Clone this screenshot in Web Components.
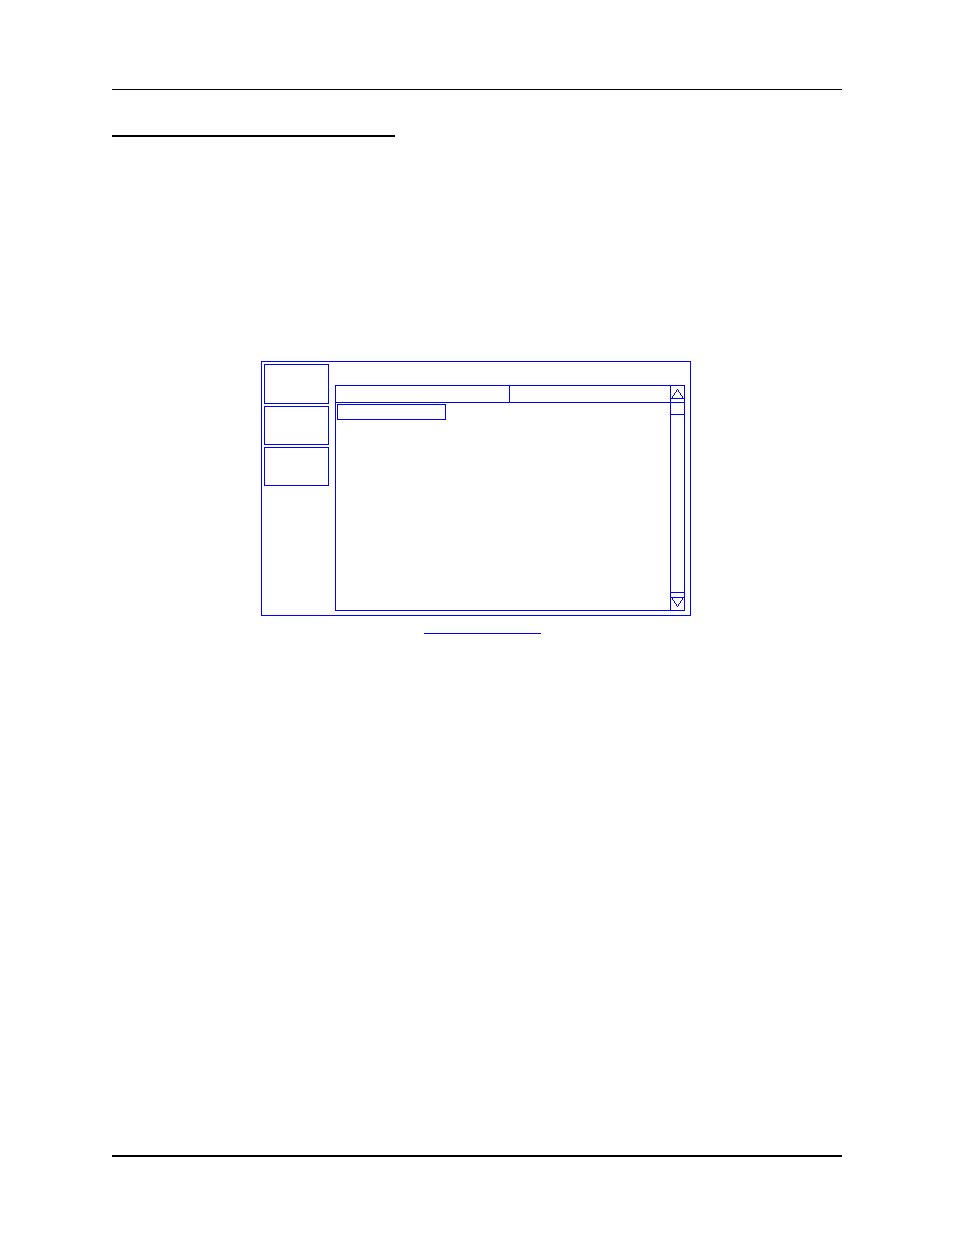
<!DOCTYPE html>
<html lang="en">
<head>
<meta charset="utf-8">
<meta name="viewport" content="width=device-width, initial-scale=1">
<title>Screen layout</title>
<style>
  body {
    margin: 0;
    background: #fff;
    color: #000;
    font-family: "Liberation Sans", sans-serif;
    --line: #00f;
  }
</style>
</head>
<body>
<manual-page>
  <screen-frame>
    <soft-key slot="keys" class="tall"></soft-key>
    <soft-key slot="keys"></soft-key>
    <soft-key slot="keys"></soft-key>
    <list-panel></list-panel>
  </screen-frame>
</manual-page>

<script>
(function () {
  "use strict";

  function define(name, html) {
    const template = document.createElement("template");
    template.innerHTML = html;

    customElements.define(name, class extends HTMLElement {
      constructor() {
        super();
        this.attachShadow({ mode: "open" });
        this.shadowRoot.appendChild(template.content.cloneNode(true));
      }
    });
  }

  // Page with its header rule, title rule and footer rule
  define("manual-page", `
  <style>
    :host {
      display: flex;
      flex-direction: column;
      box-sizing: border-box;
      min-height: 100vh;
      padding: 89px 112px 78px;
    }
    header { border-top: 1px solid; }
    .title {
      width: 283px;
      margin-top: 45px;
      border-top: 2px solid;
    }
    main { flex: 1; padding: 224px 0 48px 149px; }
    footer { border-top: 2px solid; }
  </style>
  <header></header>
  <div class="title"></div>
  <main><slot></slot></main>
  <footer></footer>
`);

  define("screen-frame", `
  <style>
    :host { display: block; max-width: 430px; }
    figure { margin: 0; }
    .screen {
      display: flex;
      gap: 6px;
      padding: 2px;
      border: 1px solid var(--line);
    }
    nav {
      display: flex;
      flex-direction: column;
      flex: none;
      gap: 2px;
      width: 65px;
    }
    .content {
      flex: 1;
      min-width: 0;
      padding: 21px 3px 2px 0;
    }
    figcaption {
      width: 117px;
      margin: 17px 0 0 163px;
      border-top: 1px solid var(--line);
    }
  </style>
  <figure>
    <div class="screen">
      <nav><slot name="keys"></slot></nav>
      <div class="content"><slot></slot></div>
    </div>
    <figcaption></figcaption>
  </figure>
`);

  define("soft-key", `
  <style>
    :host { display: flex; height: 39px; }
    :host(.tall) { height: 40px; }
    button {
      flex: 1;
      padding: 0;
      border: 1px solid var(--line);
      border-radius: 0;
      background: none;
    }
  </style>
  <button type="button" aria-label="Soft key"></button>
`);

  define("list-panel", `
  <style>
    :host {
      display: flex;
      box-sizing: border-box;
      min-height: 226px;
      border: 1px solid var(--line);
    }
    .list { flex: 1; min-width: 0; }
    table {
      width: 100%;
      border-collapse: separate;
      border-spacing: 0;
      table-layout: fixed;
    }
    th {
      box-sizing: border-box;
      height: 17px;
      padding: 0;
      border-bottom: 1px solid var(--line);
    }
    th:first-child { width: 174px; border-right: 1px solid var(--line); }
    td { padding: 1px; }
    button {
      display: block;
      box-sizing: border-box;
      width: 109px;
      height: 16px;
      padding: 0;
      border: 1px solid var(--line);
      border-radius: 0;
      background: none;
    }
  </style>
  <div class="list">
    <table>
      <thead><tr><th></th><th></th></tr></thead>
      <tbody><tr><td><button type="button" aria-label="Selected item"></button></td><td></td></tr></tbody>
    </table>
  </div>
  <scroll-bar></scroll-bar>
`);

  define("scroll-bar", `
  <style>
    :host {
      display: flex;
      flex-direction: column;
      flex: none;
      width: 13px;
      border-left: 1px solid var(--line);
    }
    button {
      display: block;
      box-sizing: border-box;
      padding: 0;
      border: 0 solid var(--line);
      border-radius: 0;
      background: none;
    }
    .up { height: 17px; border-bottom-width: 1px; }
    .down { height: 18px; border-top-width: 1px; }
    .track { flex: 1; }
    .thumb { height: 11px; border-bottom: 1px solid var(--line); }
    svg {
      display: block;
      fill: none;
      stroke: var(--line);
      shape-rendering: crispEdges;
    }
  </style>
  <button class="up" type="button" aria-label="Scroll up">
    <svg width="13" height="16" viewBox="0 0 13 16"><path d="M0 12.5H13M.5 12.5L6.5 3.5L12.5 12.5"/></svg>
  </button>
  <div class="track"><div class="thumb"></div></div>
  <button class="down" type="button" aria-label="Scroll down">
    <svg width="13" height="17" viewBox="0 0 13 17"><path d="M0 4.5H13M.5 4.5L6.5 13.5L12.5 4.5"/></svg>
  </button>
`);
})();
</script>
</body>
</html>
